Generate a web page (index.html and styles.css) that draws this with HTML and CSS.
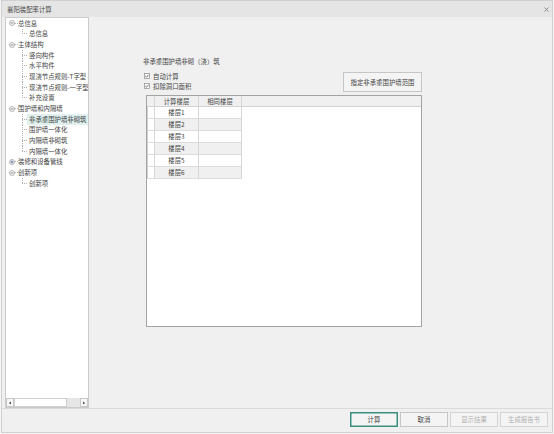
FILE: index.html
```html
<!DOCTYPE html>
<html lang="zh-CN">
<head>
<meta charset="utf-8">
<title>襄阳装配率计算</title>
<link rel="stylesheet" href="styles.css">
</head>
<body>
<div class="window">
  <div class="titlebar">
    <span class="title">襄阳装配率计算</span>
    <svg class="close" width="5" height="5" viewBox="0 0 5 5"><path d="M0.5 0.5L4.5 4.5M4.5 0.5L0.5 4.5" stroke="#8a8a8a" stroke-width="1"/></svg>
  </div>
  <div class="main">
    <div class="treepanel">
      <ul class="tree">
        <li>
          <div class="row root"><svg class="tog" width="6" height="6" viewBox="0 0 6 6"><circle cx="3" cy="3" r="2.5" fill="#fff" stroke="#a0a0a0" stroke-width="0.8"/><path d="M1.6 3H4.4" stroke="#666" stroke-width="0.8"/></svg><span class="dash"></span><span class="lbl">总信息</span></div>
          <ul class="kids">
            <li class="leaf"><span class="lbl">总信息</span></li>
          </ul>
        </li>
        <li>
          <div class="row root"><svg class="tog" width="6" height="6" viewBox="0 0 6 6"><circle cx="3" cy="3" r="2.5" fill="#fff" stroke="#a0a0a0" stroke-width="0.8"/><path d="M1.6 3H4.4" stroke="#666" stroke-width="0.8"/></svg><span class="dash"></span><span class="lbl">主体结构</span></div>
          <ul class="kids">
            <li class="leaf"><span class="lbl">竖向构件</span></li>
            <li class="leaf"><span class="lbl">水平构件</span></li>
            <li class="leaf"><span class="lbl">现浇节点规则-T字型</span></li>
            <li class="leaf"><span class="lbl">现浇节点规则-一字型</span></li>
            <li class="leaf"><span class="lbl">补充设置</span></li>
          </ul>
        </li>
        <li>
          <div class="row root"><svg class="tog" width="6" height="6" viewBox="0 0 6 6"><circle cx="3" cy="3" r="2.5" fill="#fff" stroke="#a0a0a0" stroke-width="0.8"/><path d="M1.6 3H4.4" stroke="#666" stroke-width="0.8"/></svg><span class="dash"></span><span class="lbl">围护墙和内隔墙</span></div>
          <ul class="kids">
            <li class="leaf"><span class="lbl selected">非承重围护墙非砌筑</span></li>
            <li class="leaf"><span class="lbl">围护墙一体化</span></li>
            <li class="leaf"><span class="lbl">内隔墙非砌筑</span></li>
            <li class="leaf"><span class="lbl">内隔墙一体化</span></li>
          </ul>
        </li>
        <li>
          <div class="row root"><svg class="tog" width="6" height="6" viewBox="0 0 6 6"><circle cx="3" cy="3" r="2.5" fill="#fff" stroke="#a0a0a0" stroke-width="0.8"/><path d="M1.6 3H4.4M3 1.6V4.4" stroke="#3a5a8a" stroke-width="0.8"/></svg><span class="dash"></span><span class="lbl">装修和设备管线</span></div>
        </li>
        <li>
          <div class="row root"><svg class="tog" width="6" height="6" viewBox="0 0 6 6"><circle cx="3" cy="3" r="2.5" fill="#fff" stroke="#a0a0a0" stroke-width="0.8"/><path d="M1.6 3H4.4" stroke="#666" stroke-width="0.8"/></svg><span class="dash"></span><span class="lbl">创新项</span></div>
          <ul class="kids">
            <li class="leaf"><span class="lbl">创新项</span></li>
          </ul>
        </li>
      </ul>
      <div class="hscroll">
        <span class="sbtn"><svg width="4" height="4" viewBox="0 0 4 4"><path d="M3 0.5V3.5L0.8 2Z" fill="#555"/></svg></span>
        <span class="thumb"></span>
        <span class="track"></span>
        <span class="sbtn"><svg width="4" height="4" viewBox="0 0 4 4"><path d="M1 0.5V3.5L3.2 2Z" fill="#555"/></svg></span>
      </div>
    </div>
    <div class="content">
      <div class="inner">
        <div class="heading">非承重围护墙非砌（浇）筑</div>
        <div class="options">
          <div class="checks">
            <div class="chk"><svg width="6" height="6" viewBox="0 0 6 6"><rect x="0.5" y="0.5" width="5" height="5" fill="#fff" stroke="#8a8a8a" stroke-width="0.7"/><path d="M1.3 3L2.5 4.2L4.7 1.7" fill="none" stroke="#444" stroke-width="0.8"/></svg><span>自动计算</span></div>
            <div class="chk"><svg width="6" height="6" viewBox="0 0 6 6"><rect x="0.5" y="0.5" width="5" height="5" fill="#fff" stroke="#8a8a8a" stroke-width="0.7"/><path d="M1.3 3L2.5 4.2L4.7 1.7" fill="none" stroke="#444" stroke-width="0.8"/></svg><span>扣除洞口面积</span></div>
          </div>
          <button class="btn range">指定非承重围护墙范围</button>
        </div>
        <div class="grid">
          <div class="ghead">
            <span class="rh"></span>
            <span class="c1">计算楼层</span>
            <span class="c2">相同楼层</span>
          </div>
          <div class="grow"><span class="rh"></span><span class="c1">楼层1</span><span class="c2"></span></div>
          <div class="grow alt"><span class="rh"></span><span class="c1">楼层2</span><span class="c2"></span></div>
          <div class="grow"><span class="rh"></span><span class="c1">楼层3</span><span class="c2"></span></div>
          <div class="grow alt"><span class="rh"></span><span class="c1">楼层4</span><span class="c2"></span></div>
          <div class="grow"><span class="rh"></span><span class="c1">楼层5</span><span class="c2"></span></div>
          <div class="grow alt"><span class="rh"></span><span class="c1">楼层6</span><span class="c2"></span></div>
        </div>
      </div>
    </div>
  </div>
  <div class="footer">
    <button class="btn primary">计算</button>
    <button class="btn">取消</button>
    <button class="btn disabled">显示结果</button>
    <button class="btn disabled">生成报告书</button>
  </div>
</div>
</body>
</html>
```

FILE: styles.css
```css
html, body {
  margin: 0;
  padding: 0;
}
body {
  background: #f6f6f6;
  font-family: "Noto Sans CJK SC", "Noto Sans", sans-serif;
  font-size: 6.4px;
  color: #444;
  width: 554px;
  height: 434px;
  overflow: hidden;
}
.window {
  box-sizing: border-box;
  width: 552px;
  height: 433px;
  margin-left: 1px;
  border: 1px solid #d0d0d0;
  background: #f0f0f0;
  display: flex;
  flex-direction: column;
}
.titlebar {
  flex: none;
  height: 16px;
  background: #e5e5e5;
  display: flex;
  align-items: center;
  justify-content: space-between;
  padding: 0 3px 0 5px;
}
.title {
  color: #4a4a4a;
  line-height: 9px;
}
.close {
  display: block;
}
.main {
  flex: none;
  height: 391px;
  display: flex;
}
.treepanel {
  box-sizing: border-box;
  flex: none;
  width: 84px;
  height: 391px;
  margin-left: 3px;
  border: 1px solid #cacaca;
  background: #fff;
  display: flex;
  flex-direction: column;
}
.tree, .tree ul {
  list-style: none;
  margin: 0;
  padding: 0;
}
.tree {
  flex: 1;
  overflow: hidden;
  white-space: nowrap;
}
.row {
  height: 10.67px;
  display: flex;
  align-items: center;
}
.root {
  padding-left: 3px;
}
.tog {
  display: block;
  flex: none;
}
.dash {
  width: 3px;
  height: 1px;
  background: repeating-linear-gradient(to right, #b0b0b0 0 1px, transparent 1px 2px);
  flex: none;
}
.lbl {
  line-height: 9px;
  color: #444;
}
.leaf {
  height: 10.67px;
  margin-left: 16px;
  padding-left: 7px;
  display: flex;
  align-items: center;
  background-image:
    repeating-linear-gradient(to bottom, #b0b0b0 0 1px, transparent 1px 2px),
    repeating-linear-gradient(to right, #b0b0b0 0 1px, transparent 1px 2px);
  background-repeat: no-repeat;
  background-size: 1px 100%, 5px 1px;
  background-position: 0 0, 0 50%;
}
.leaf:last-child {
  background-size: 1px 50%, 5px 1px;
}
.lbl.selected {
  background: #dff0ef;
  margin-left: -2px;
  padding: 1px 2px;
  flex: 1;
}
.hscroll {
  flex: none;
  height: 9px;
  display: flex;
}
.sbtn {
  box-sizing: border-box;
  width: 8px;
  height: 9px;
  border: 1px solid #c8c8c8;
  background: #f7f7f7;
  display: flex;
  align-items: center;
  justify-content: center;
}
.sbtn svg {
  display: block;
}
.thumb {
  box-sizing: border-box;
  width: 53px;
  height: 9px;
  border: 1px solid #cfcfcf;
  background: #fff;
}
.track {
  width: 13px;
  height: 9px;
  background: #e6e6e6;
}
.content {
  flex: 1;
  padding: 40px 0 0 54px;
}
.inner {
  width: 279px;
}
.heading {
  height: 9px;
  line-height: 9px;
  color: #444;
}
.options {
  margin-top: 5px;
  height: 21px;
  display: flex;
  justify-content: space-between;
  align-items: flex-start;
}
.chk {
  height: 10px;
  display: flex;
  align-items: center;
  gap: 3px;
  padding-left: 1px;
  line-height: 9px;
}
.chk svg {
  display: block;
}
.btn {
  box-sizing: border-box;
  font-family: inherit;
  font-size: 6.4px;
  line-height: 9px;
  color: #444;
  background: #f4f4f4;
  border: 1px solid #c6c6c6;
  padding: 0;
  margin: 0;
}
.range {
  width: 79px;
  height: 20px;
  margin-top: 1px;
}
.grid {
  box-sizing: border-box;
  margin-top: 3px;
  margin-left: 3px;
  width: 276px;
  height: 232px;
  border: 1px solid #a3a3a3;
  background: #fff;
}
.ghead {
  box-sizing: border-box;
  height: 11px;
  display: flex;
  background: #f0f0f0;
  border-bottom: 1px solid #d2d2d2;
}
.grow {
  box-sizing: border-box;
  width: 95px;
  height: 12px;
  display: flex;
  border-bottom: 1px solid #dcdcdc;
}
.rh, .c1, .c2 {
  box-sizing: border-box;
  display: flex;
  align-items: center;
  justify-content: center;
  line-height: 9px;
  border-right: 1px solid #d6d6d6;
}
.rh {
  width: 8px;
}
.grow .rh {
  border-left: 1px solid #d0d0d0;
}
.c1 {
  width: 44px;
}
.c2 {
  width: 43px;
}
.grow.alt .c1, .grow.alt .c2 {
  background: #f0f0f0;
}
.footer {
  box-sizing: border-box;
  flex: none;
  height: 24px;
  border-top: 1px solid #dadada;
  display: flex;
  justify-content: flex-end;
  align-items: flex-start;
  gap: 2px;
  padding: 3px 4px 0 0;
}
.footer .btn {
  width: 48px;
  height: 15px;
}
.btn.primary {
  border-color: #3b8f80;
  box-shadow: inset 0 0 0 0.5px #3b8f80;
}
.btn.disabled {
  color: #b2b2b2;
  border-color: #d4d4d4;
}
```
